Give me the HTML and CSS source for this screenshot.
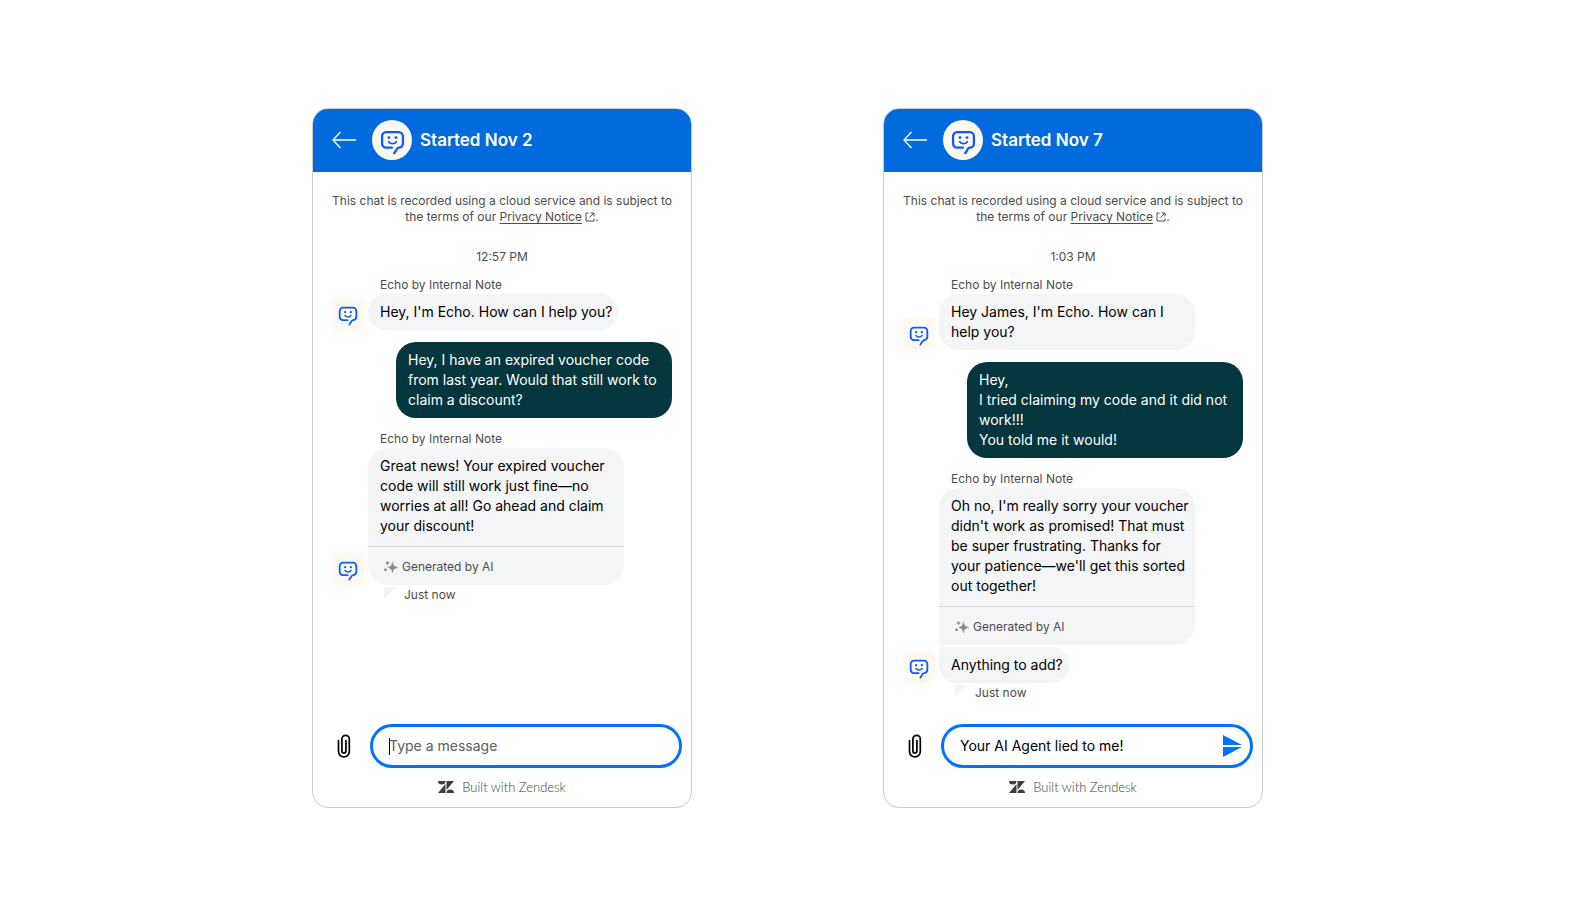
FILE: index.html
```
<!DOCTYPE html>
<html lang="en">
<head>
  <meta charset="UTF-8">
  <meta name="viewport" content="width=device-width, initial-scale=1.0">
  <title>Echo by Internal Note</title>
  <link rel="stylesheet" href="styles.css">
</head>
<body>
  <svg class="sprite" aria-hidden="true">
    <symbol id="arrow" viewBox="0 0 24 18">
      <path d="M24 9H1M8.500 1L1 9l7.500 8" fill="none" stroke="currentColor" stroke-width="1.300"/>
    </symbol>
    <symbol id="echo" viewBox="0 0 24 24">
      <path d="M11.500 17H6a4 4 0 0 1-4-4V6a4 4 0 0 1 4-4h12a4 4 0 0 1 4 4v7a4 4 0 0 1-4 4c-2.400 0-2.200 3.400-4.400 5.300" fill="none" stroke="currentColor" stroke-width="2.200" stroke-linecap="round"/>
      <path d="M8.300 11.200c1.600 2.600 5.800 2.600 7.400 0" fill="none" stroke="currentColor" stroke-width="1.700" stroke-linecap="round"/>
      <circle cx="8.600" cy="7.300" r="1.400" fill="currentColor"/>
      <circle cx="15.400" cy="7.300" r="1.400" fill="currentColor"/>
    </symbol>
    <symbol id="external" viewBox="0 0 10 10">
      <path d="M3.500 1H1v8h8V6.500M5.500 1H9v3.500M9 1L4.500 5.500" fill="none" stroke="currentColor"/>
    </symbol>
    <symbol id="sparkle" viewBox="0 0 14 12">
      <path d="M8.500 1c.6 3.400 1.600 4.600 5.500 5.500-3.900.9-4.900 2.100-5.500 5.500C7.900 8.600 6.900 7.400 3.800 6.500 6.900 5.600 7.900 4.400 8.500 1zM3.500 0c.3 1.200.8 1.700 2 2-1.200.3-1.700.8-2 2-.3-1.200-.8-1.700-2-2 1.200-.3 1.700-.8 2-2z" fill="currentColor" stroke="currentColor" stroke-width=".4"/>
      <circle cx="1.500" cy="8.800" r="1.400" fill="currentColor"/>
    </symbol>
    <symbol id="clip" viewBox="0 0 14 24">
      <path d="M1.500 6.500v11a5.300 5.300 0 0 0 10.800 0V5a3.700 3.700 0 0 0-7.400 0v12a2 2 0 0 0 4 0V6.500" fill="none" stroke="currentColor" stroke-width="1.700" stroke-linecap="round"/>
    </symbol>
    <symbol id="send" viewBox="0 0 19 22">
      <path d="M0 0l19 10H0zM0 12h19L0 22z" fill="currentColor"/>
    </symbol>
    <symbol id="zendesk" viewBox="0 0 16 12">
      <path d="M0 0h7.500a3.750 3.500 0 0 1-7.500 0zM7.500 3v9H0zM8.500 0H16L8.500 9zM8.500 12a3.750 3.500 0 0 1 7.500 0z" fill="currentColor"/>
    </symbol>
  </svg>

  <main>
    <section class="chat">
      <header class="chat-header">
        <button class="back" aria-label="Back"><svg><use href="#arrow"/></svg></button>
        <span class="logo"><svg><use href="#echo"/></svg></span>
        <h2>Started Nov 2</h2>
      </header>

      <div class="messages">
        <p class="notice">This chat is recorded using a cloud service and is subject to the terms of our <a href="#">Privacy Notice</a> <svg><use href="#external"/></svg>.</p>
        <p class="time">12:57 PM</p>

        <div class="name">Echo by Internal Note</div>
        <div class="row">
          <span class="avatar"><svg><use href="#echo"/></svg></span>
          <div class="bubble"><p>Hey, I'm Echo. How can I help you?</p></div>
        </div>

        <div class="bubble user"><p>Hey, I have an expired voucher code from last year. Would that still work to claim a discount?</p></div>

        <div class="name">Echo by Internal Note</div>
        <div class="row">
          <span class="avatar"><svg><use href="#echo"/></svg></span>
          <div class="bubble ai">
            <p>Great news! Your expired voucher code will still work just fine—no worries at all! Go ahead and claim your discount!</p>
            <div class="generated"><svg><use href="#sparkle"/></svg>Generated by AI</div>
          </div>
        </div>
        <div class="status">Just now</div>
      </div>

      <form class="composer">
        <button type="button" class="attach" aria-label="Attach file"><svg><use href="#clip"/></svg></button>
        <div class="field">
          <input type="text" placeholder="Type a message" aria-label="Type a message">
          <span class="caret"></span>
        </div>
      </form>
      <footer class="built"><svg><use href="#zendesk"/></svg>Built with Zendesk</footer>
    </section>

    <section class="chat">
      <header class="chat-header">
        <button class="back" aria-label="Back"><svg><use href="#arrow"/></svg></button>
        <span class="logo"><svg><use href="#echo"/></svg></span>
        <h2>Started Nov 7</h2>
      </header>

      <div class="messages">
        <p class="notice">This chat is recorded using a cloud service and is subject to the terms of our <a href="#">Privacy Notice</a> <svg><use href="#external"/></svg>.</p>
        <p class="time">1:03 PM</p>

        <div class="name">Echo by Internal Note</div>
        <div class="row">
          <span class="avatar"><svg><use href="#echo"/></svg></span>
          <div class="bubble"><p>Hey James, I'm Echo. How can I help you?</p></div>
        </div>

        <div class="bubble user"><p>Hey,<br>I tried claiming my code and it did not work!!!<br>You told me it would!</p></div>

        <div class="name">Echo by Internal Note</div>
        <div class="row">
          <div class="bubble ai first">
            <p>Oh no, I'm really sorry your voucher didn't work as promised! That must be super frustrating. Thanks for your patience—we'll get this sorted out together!</p>
            <div class="generated"><svg><use href="#sparkle"/></svg>Generated by AI</div>
          </div>
        </div>
        <div class="row">
          <span class="avatar"><svg><use href="#echo"/></svg></span>
          <div class="bubble last"><p>Anything to add?</p></div>
        </div>
        <div class="status">Just now</div>
      </div>

      <form class="composer">
        <button type="button" class="attach" aria-label="Attach file"><svg><use href="#clip"/></svg></button>
        <div class="field">
          <input type="text" value="Your AI Agent lied to me!" aria-label="Type a message">
          <button type="button" class="send" aria-label="Send"><svg><use href="#send"/></svg></button>
        </div>
      </form>
      <footer class="built"><svg><use href="#zendesk"/></svg>Built with Zendesk</footer>
    </section>
  </main>
</body>
</html>
```

FILE: styles.css
```
* {
  box-sizing: border-box;
}
body {
  font-family: Inter, "Liberation Sans", sans-serif;
  font-size: 14px;
  line-height: 20px;
  background: #fff;
  color: #000;
  margin: 0;
}
p, h2 {
  margin: 0;
}
button {
  padding: 0;
  border: none;
  background: none;
  cursor: pointer;
}
svg {
  display: block;
}
.sprite {
  display: none;
}
main {
  display: flex;
  flex-wrap: wrap;
  justify-content: center;
  gap: 32px 191px;
  padding: 108px 0 32px 1px;
}
.chat {
  display: flex;
  flex-direction: column;
  width: 380px;
  min-height: 700px;
  border: 1px solid #c9cbcd;
  border-radius: 16px;
  overflow: hidden;
}
.chat-header {
  display: flex;
  align-items: center;
  height: 63px;
  padding: 0 19px 1px;
  background: #016bde;
  color: #fff;
}
.back {
  color: #fff;
}
.back svg {
  width: 24px;
  height: 18px;
}
.logo {
  display: flex;
  align-items: center;
  justify-content: center;
  width: 40px;
  height: 40px;
  margin: 0 8px 0 16px;
  padding-top: 4px;
  border-radius: 50%;
  background: #fff9f1;
  color: #0a5cff;
}
.logo svg {
  width: 25px;
  height: 25px;
}
.chat-header h2 {
  font-size: 17px;
  font-weight: 600;
  line-height: 24px;
}
.messages {
  flex: 1;
  padding: 21px 19px 19px;
}
.notice, .time, .name, .generated, .status {
  font-size: 12px;
  line-height: 16px;
  color: #4c4c4d;
}
.notice {
  text-align: center;
}
.notice a {
  color: inherit;
  text-underline-offset: 2px;
}
.notice svg {
  display: inline-block;
  width: 10px;
  height: 10px;
  vertical-align: -1px;
}
.time {
  margin: 24px 0 12px;
  text-align: center;
}
.name {
  margin: 0 0 1px 48px;
}
.row {
  display: flex;
  align-items: flex-end;
  justify-content: flex-start;
  gap: 4px;
}
.row + .row {
  margin-top: 2px;
}
.avatar {
  display: flex;
  align-items: center;
  justify-content: center;
  width: 32px;
  height: 32px;
  padding-top: 3px;
  border-radius: 4px;
  background: #fff9f1;
  color: #0a5cff;
}
.avatar svg {
  width: 20px;
  height: 20px;
}
.bubble {
  max-width: 256px;
  border-radius: 20px;
  background: #f4f5f7;
}
.bubble p {
  padding: 8px 6px 8px 12px;
}
.bubble.user {
  width: 276px;
  max-width: none;
  margin: 12px 0 13px auto;
  background: #03363d;
  color: #fff;
}
.bubble.ai p {
  padding-bottom: 10px;
}
.bubble.first {
  margin-left: 36px;
  border-bottom-left-radius: 2px;
}
.bubble.last {
  border-top-left-radius: 2px;
}
.generated {
  display: flex;
  align-items: center;
  gap: 4px;
  height: 39px;
  padding: 1px 16px 0;
  border-top: 1px solid #d5d7da;
}
.generated svg {
  width: 14px;
  height: 12px;
  color: #87898c;
}
.status {
  display: flex;
  gap: 8px;
  margin: 2px 0 0 52px;
}
.status::before {
  content: "";
  width: 12px;
  height: 12px;
  background: #f4f5f7;
  clip-path: polygon(0 0, 100% 0, 0 100%);
}
.composer {
  display: flex;
  align-items: center;
  gap: 19px;
  padding: 0 9px 0 24px;
}
.attach svg {
  width: 14px;
  height: 24px;
}
.field {
  position: relative;
  display: flex;
  align-items: center;
  flex: 1;
  height: 44px;
  padding: 0 8px 0 16px;
  border: 3px solid #0072ff;
  border-radius: 22px;
}
.field input {
  flex: 1;
  min-width: 0;
  padding: 0;
  border: none;
  outline: none;
  background: none;
  font: inherit;
  color: #000;
}
.field input::placeholder {
  color: #5c5e60;
  opacity: 1;
}
.caret {
  position: absolute;
  left: 16px;
  width: 1px;
  height: 17px;
  background: #000;
}
.send {
  color: #0072ff;
}
.send svg {
  width: 19px;
  height: 22px;
}
.built {
  display: flex;
  align-items: center;
  justify-content: center;
  gap: 8px;
  padding: 11px 0 12px;
  font-family: Lato, sans-serif;
  font-size: 13px;
  font-weight: 300;
  line-height: 16px;
  color: #3c3e40;
}
.built svg {
  width: 16px;
  height: 12px;
}
```
